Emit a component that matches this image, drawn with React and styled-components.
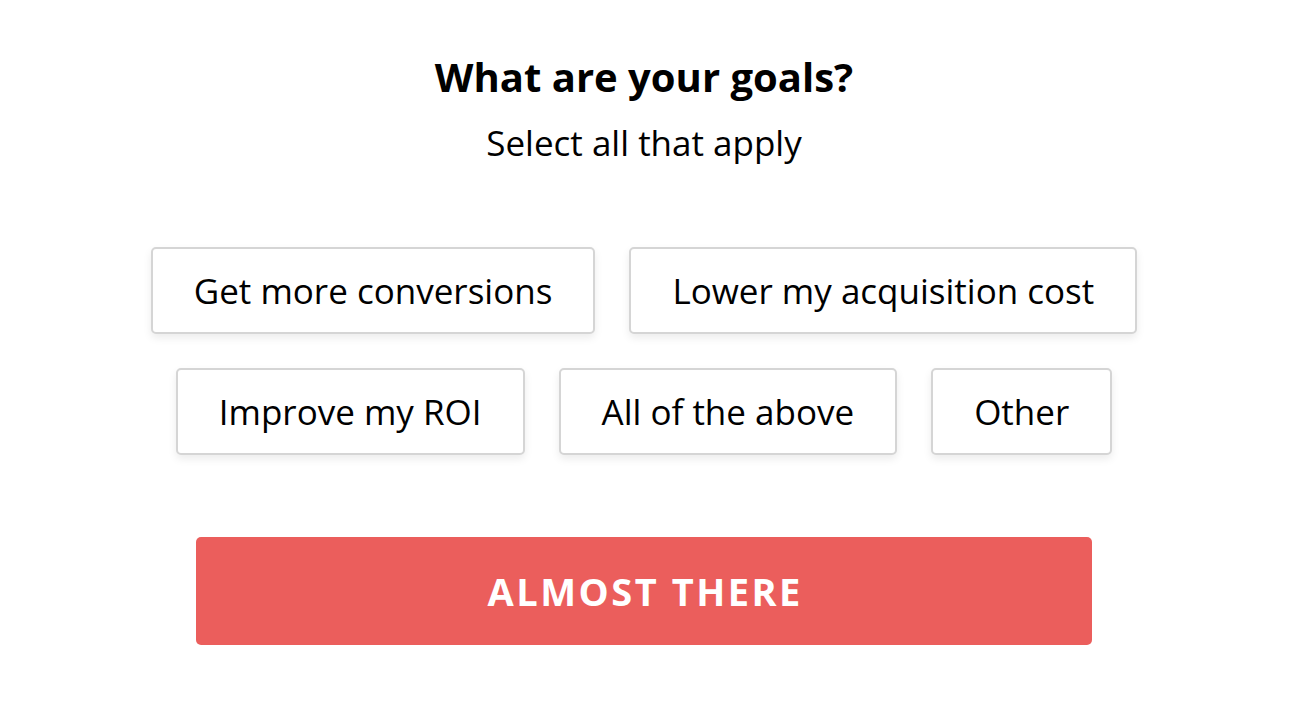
import React from "react";
import styled, { createGlobalStyle } from "styled-components";

const Global = createGlobalStyle`
  html, body { margin: 0; padding: 0; background: #ffffff; }
  body { font-family: "Open Sans", "Noto Sans", sans-serif; color: #000; }
`;

const Page = styled.main`
  display: flex;
  flex-direction: column;
  align-items: center;
  padding: 50px 8px 0 0;
`;

const Title = styled.h1`
  margin: 0;
  font-size: 40px;
  font-weight: 700;
  line-height: 54px;
  color: #000;
`;

const Subtitle = styled.p`
  margin: 15px 0 0;
  font-size: 35px;
  font-weight: 400;
  line-height: 48px;
  color: #000;
`;

const Options = styled.div`
  display: flex;
  flex-direction: column;
  align-items: center;
  margin-top: 80px;
  gap: 34px;
`;

const Row = styled.div`
  display: flex;
  justify-content: center;
  gap: 34px;
`;

const Option = styled.button`
  font-family: inherit;
  font-size: 35px;
  line-height: 43px;
  color: #000;
  background: #fff;
  border: 2px solid #d5d5d5;
  border-radius: 5px;
  padding: 20px 41px;
  box-shadow: 0 4px 8px rgba(0, 0, 0, 0.08);
  cursor: pointer;
`;

const Submit = styled.button`
  margin-top: 82px;
  width: 896px;
  height: 108px;
  border: none;
  border-radius: 5px;
  background: #eb5e5c;
  color: #fff;
  font-family: inherit;
  font-size: 38px;
  font-weight: 700;
  letter-spacing: 2.5px;
  text-indent: 2.5px;
  text-transform: uppercase;
  cursor: pointer;
`;

const rows = [
  ["Get more conversions", "Lower my acquisition cost"],
  ["Improve my ROI", "All of the above", "Other"],
];

export default function App() {
  return (
    <>
      <Global />
      <Page>
        <Title>What are your goals?</Title>
        <Subtitle>Select all that apply</Subtitle>
        <Options>
          {rows.map((r, i) => (
            <Row key={i}>
              {r.map((o) => (
                <Option key={o}>{o}</Option>
              ))}
            </Row>
          ))}
        </Options>
        <Submit>Almost there</Submit>
      </Page>
    </>
  );
}
